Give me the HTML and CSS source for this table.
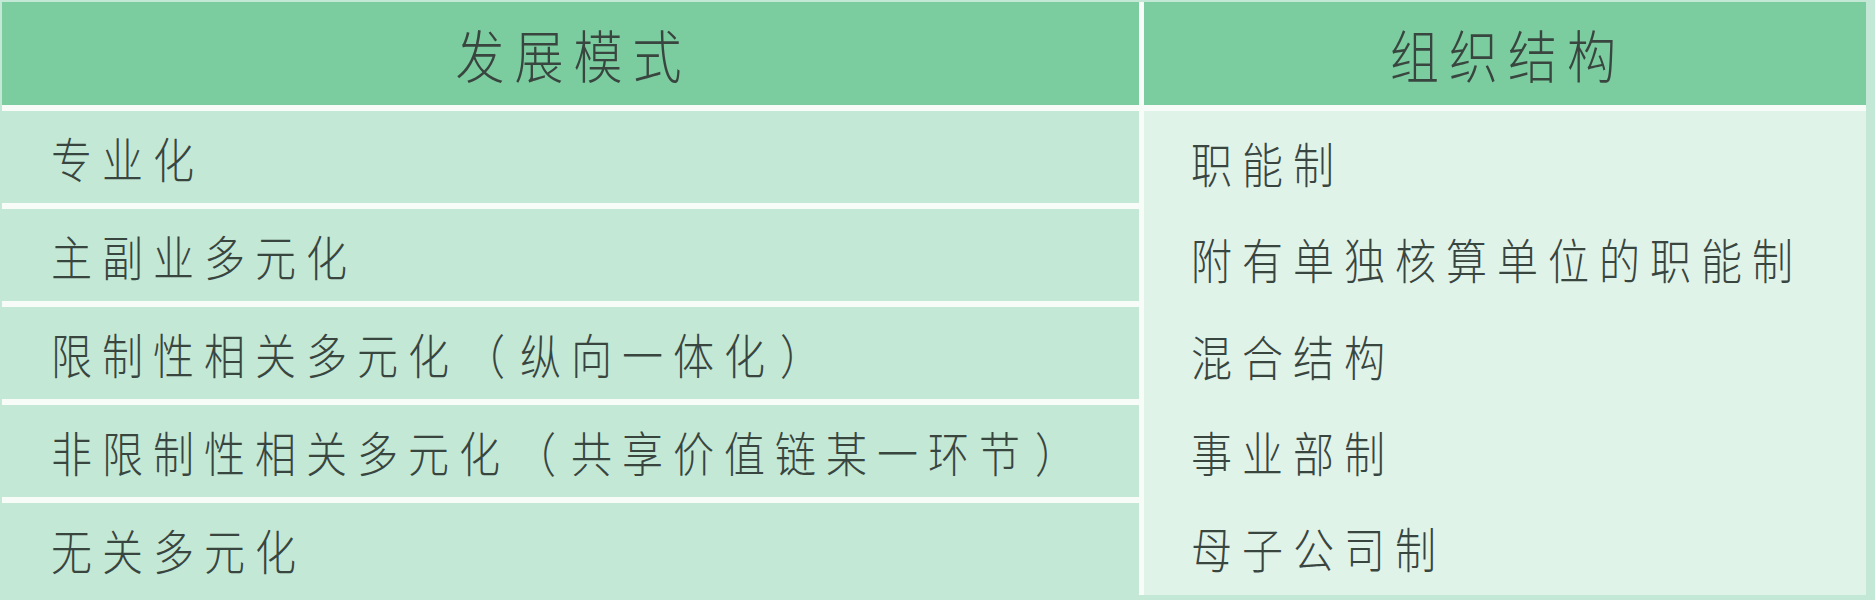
FILE: index.html
```html
<!DOCTYPE html>
<html lang="zh-CN">
<head>
<meta charset="utf-8">
<title>发展模式与组织结构</title>
<link rel="stylesheet" href="styles.css">
</head>
<body>
<div class="table">
  <div class="head"><span class="txt">发展模式</span></div>
  <div class="head"><span class="txt">组织结构</span></div>
  <div class="cell left r1"><span class="txt">专业化</span></div>
  <div class="right">
    <div class="line"><span class="txt">职能制</span></div>
    <div class="line"><span class="txt">附有单独核算单位的职能制</span></div>
    <div class="line"><span class="txt">混合结构</span></div>
    <div class="line"><span class="txt">事业部制</span></div>
    <div class="line"><span class="txt">母子公司制</span></div>
  </div>
  <div class="cell left r2"><span class="txt">主副业多元化</span></div>
  <div class="cell left r3"><span class="txt">限制性相关多元化<span class="paren">（</span>纵向一体化<span class="paren">）</span></span></div>
  <div class="cell left r4"><span class="txt">非限制性相关多元化<span class="paren">（</span>共享价值链某一环节<span class="paren">）</span></span></div>
  <div class="cell left r5"><span class="txt">无关多元化</span></div>
</div>
</body>
</html>
```

FILE: styles.css
```css
html, body {
  margin: 0;
  padding: 0;
}
body {
  background: #c3e8d5;
  width: 1875px;
  height: 600px;
  overflow: hidden;
  font-family: "Noto Sans CJK SC", "Noto Sans", sans-serif;
  color: #39453f;
}
.table {
  margin: 2px 0 0 2px;
  width: 1864px;
  display: grid;
  grid-template-columns: 1137px 722px;
  grid-template-rows: 103px repeat(5, 92px);
  column-gap: 5px;
  row-gap: 6px;
  background: #f7fcf9;
}
.txt {
  display: inline-block;
  transform: scaleY(1.16);
  white-space: nowrap;
}
.paren {
  margin: 0 5px;
}
.head {
  background: #7bcc9f;
  display: flex;
  align-items: center;
  justify-content: center;
  font-size: 49px;
  letter-spacing: 10px;
  font-weight: 300;
}
.head .txt {
  margin-left: 6px;
}
.cell {
  background: #c3e8d5;
  display: flex;
  align-items: center;
  padding-left: 49px;
  font-size: 41px;
  letter-spacing: 10px;
  font-weight: 300;
}
.r1 { grid-column: 1; grid-row: 2; }
.r2 { grid-column: 1; grid-row: 3; }
.r3 { grid-column: 1; grid-row: 4; }
.r4 { grid-column: 1; grid-row: 5; }
.r5 { grid-column: 1; grid-row: 6; }
.right {
  grid-column: 2;
  grid-row: 2 / span 5;
  background: #e0f3e9;
  display: flex;
  flex-direction: column;
  padding-left: 47px;
  padding-top: 3px;
  font-size: 41px;
  letter-spacing: 10px;
  font-weight: 300;
}
.line {
  height: 98px;
  display: flex;
  align-items: center;
}
```
